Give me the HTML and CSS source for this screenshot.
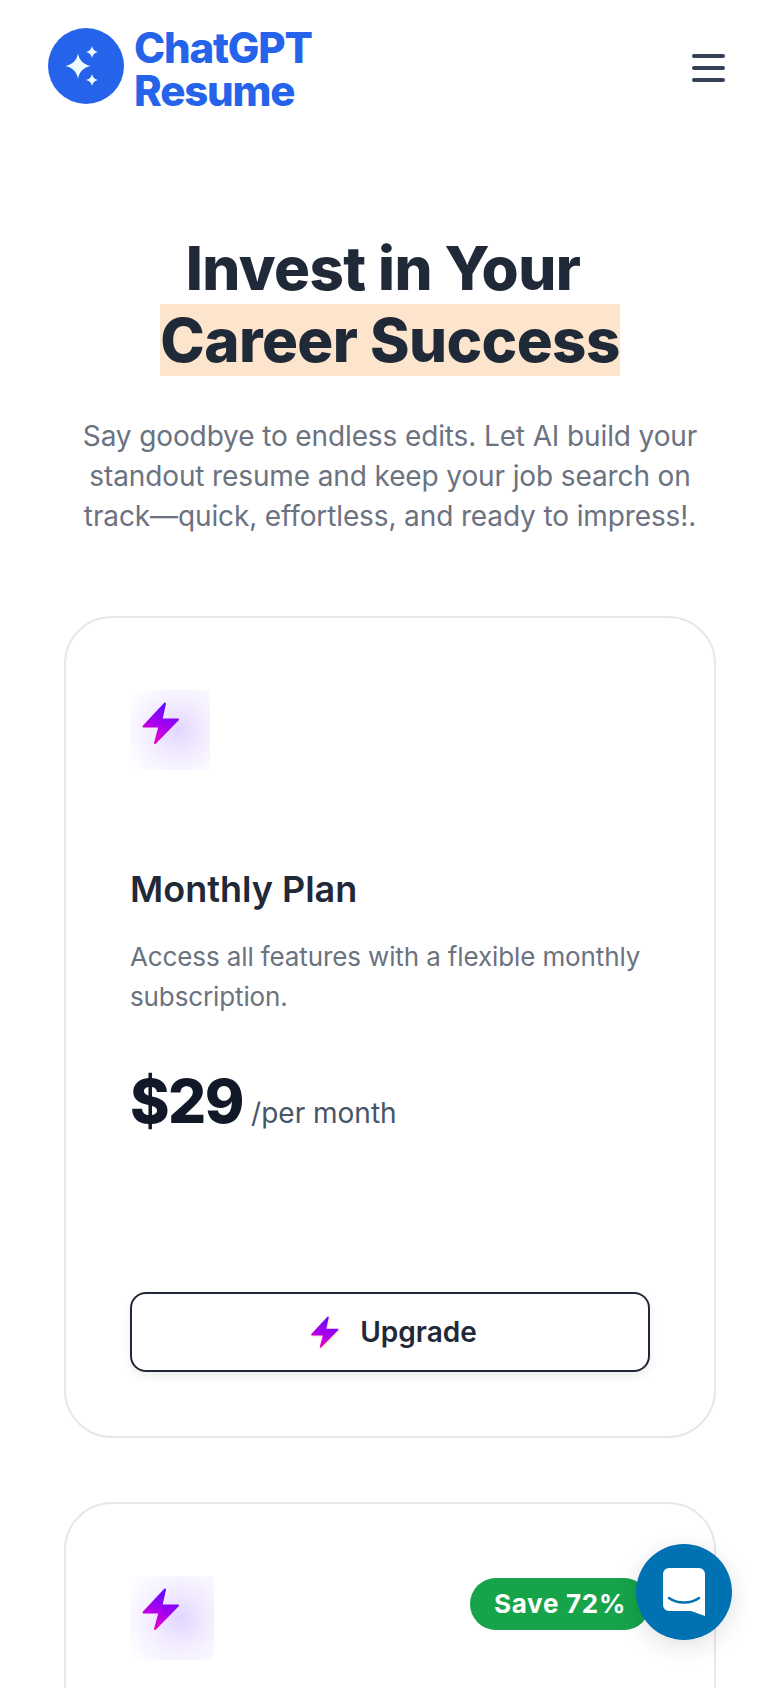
FILE: index.html
```html
<!DOCTYPE html>
<html lang="en">
<head>
<meta charset="UTF-8">
<meta name="viewport" content="width=device-width, initial-scale=1.0">
<title>ChatGPT Resume - Pricing</title>
<link rel="stylesheet" href="styles.css">
</head>
<body>

<svg class="defs" width="0" height="0" aria-hidden="true">
    <defs>
        <linearGradient id="bolt-fill" x1="0.7" y1="0" x2="0.3" y2="1">
            <stop offset="0" stop-color="#5b0cff"/>
            <stop offset="0.5" stop-color="#a200f0"/>
            <stop offset="1" stop-color="#ea00c8"/>
        </linearGradient>
        <symbol id="bolt" viewBox="0 0 40 44">
            <path d="M24 2.500 L20.500 18.500 H37 L14 42 L18.500 25.500 H2.500 Z" fill="url(#bolt-fill)" stroke="url(#bolt-fill)" stroke-width="2" stroke-linejoin="round"/>
        </symbol>
    </defs>
</svg>

<header class="site-header">
    <a class="logo" href="#">
        <svg class="logo-mark" viewBox="0 0 76 76">
            <circle cx="38" cy="38" r="38" fill="#2563eb"/>
            <path d="M30 25.500 C31.500 32.500 35 36 42.500 38 C35 40 31.500 43.500 30 50.500 C28.500 43.500 25 40 17.500 38 C25 36 28.500 32.500 30 25.500 Z" fill="#f0fbff"/>
            <path d="M44 18 C44.800 21.500 46.500 23.200 50 24 C46.500 24.800 44.800 26.500 44 30 C43.200 26.500 41.500 24.800 38 24 C41.500 23.200 43.200 21.500 44 18 Z" fill="#f0fbff"/>
            <path d="M44 46 C44.800 49.500 46.500 51.200 50 52 C46.500 52.800 44.800 54.500 44 58 C43.200 54.500 41.500 52.800 38 52 C41.500 51.200 43.200 49.500 44 46 Z" fill="#f0fbff"/>
        </svg>
        <span class="logo-text">ChatGPT<br>Resume</span>
    </a>
    <button class="menu-btn" aria-label="Menu">
        <svg viewBox="0 0 48 48" width="48" height="48">
            <path d="M10 12 H39 M10 24 H39 M10 36 H39" stroke="#334155" stroke-width="4" stroke-linecap="round" fill="none"/>
        </svg>
    </button>
</header>

<main>
    <section class="hero">
        <h1><span class="hero-first">Invest in Your</span><br><span class="mark">Career Success</span></h1>
        <p>Say goodbye to endless edits. Let AI build your standout resume and keep your job search on track—quick, effortless, and ready to impress!.</p>
    </section>

    <section class="plans">
        <div class="plan">
            <div class="plan-icon"><svg width="40" height="44"><use href="#bolt"/></svg></div>
            <h3>Monthly Plan</h3>
            <p class="plan-desc">Access all features with a flexible monthly subscription.</p>
            <div class="price"><span class="amount">$29</span> <span class="per">/per month</span></div>
            <a class="upgrade" href="#"><svg width="30" height="36"><use href="#bolt"/></svg>Upgrade</a>
        </div>

        <div class="plan plan-next">
            <span class="save">Save 72%</span>
            <div class="plan-icon plan-icon-lg"><svg width="40" height="44"><use href="#bolt"/></svg></div>
        </div>
    </section>
</main>

<button class="chat" aria-label="Chat">
    <svg viewBox="0 0 42 48" width="42" height="48">
        <path d="M6 0 H36 A6 6 0 0 1 42 6 V48 L28 43 H6 A6 6 0 0 1 0 37 V6 A6 6 0 0 1 6 0 Z" fill="#fff"/>
        <path d="M6 30 C14 36 28 36 36 30" stroke="#0071b2" stroke-width="2.500" stroke-linecap="round" fill="none"/>
    </svg>
</button>

</body>
</html>
```

FILE: styles.css
```css
/* Page */
html, body {
    margin: 0;
    height: 1688px;
    overflow: hidden;
}

body {
    background: #fff;
    color: #1f2937;
    font-family: Inter, "Liberation Sans", sans-serif;
}

.defs {
    position: absolute;
}

/* Header */
.site-header {
    display: flex;
    align-items: center;
    justify-content: space-between;
    height: 132px;
    padding: 0 48px;
}

.logo {
    display: flex;
    align-items: center;
    gap: 10px;
    text-decoration: none;
}

.logo-mark {
    width: 76px;
    height: 76px;
}

.logo-text {
    padding-top: 6px;
    color: #2563eb;
    font-size: 42px;
    font-weight: 800;
    line-height: 43px;
    letter-spacing: -1.200px;
}

.menu-btn {
    display: flex;
    padding: 0;
    border: 0;
    background: none;
    margin-top: 4px;
}

/* Hero */
.hero {
    padding: 100px 64px 0;
    text-align: center;
}

.hero h1 {
    margin: 0;
    font-size: 60px;
    font-weight: 800;
    line-height: 72px;
    letter-spacing: -0.600px;
}

.hero-first {
    padding-right: 14px;
}

.mark {
    background: #fce5cc;
}

.hero p {
    margin: 40px 0 0;
    color: #6b7280;
    font-size: 28px;
    line-height: 40px;
    letter-spacing: -0.120px;
}

/* Plans */
.plans {
    display: flex;
    flex-direction: column;
    gap: 64px;
    padding: 80px 64px 0;
}

.plan {
    position: relative;
    padding: 72px 64px 64px;
    border: 2px solid #e5e7eb;
    border-radius: 48px;
}

.plan-icon {
    box-sizing: border-box;
    width: 80px;
    height: 80px;
    padding: 11px;
    background: radial-gradient(circle at 60% 50%, #e2d6ff 0%, #f2ecff 42%, #fdfcff 85%);
}

.plan-icon svg {
    display: block;
}

.plan-icon-lg {
    width: 84px;
    height: 84px;
}

.plan h3 {
    margin: 97px 0 0;
    font-size: 36px;
    font-weight: 600;
    line-height: 44px;
}

.plan-desc {
    margin: 26px 0 0;
    color: #6b7280;
    font-size: 26px;
    line-height: 40px;
    letter-spacing: -0.120px;
}

.price {
    display: flex;
    align-items: baseline;
    gap: 8px;
    margin-top: 48px;
    color: #475569;
    font-size: 28px;
}

.amount {
    color: #111827;
    font-size: 60px;
    font-weight: 800;
    line-height: 72px;
    letter-spacing: -1.500px;
}

.upgrade {
    display: flex;
    align-items: center;
    justify-content: center;
    gap: 20px;
    height: 76px;
    margin-top: 155px;
    padding-left: 7px;
    border: 2px solid #1f2937;
    border-radius: 16px;
    box-shadow: 0 4px 10px rgba(0, 0, 0, 0.08);
    color: #1f2937;
    font-size: 28px;
    font-weight: 600;
    text-decoration: none;
}

.upgrade svg {
    filter: drop-shadow(1px 1px 1px rgba(250, 180, 120, 0.5));
}

.plan-next {
    height: 600px;
}

.save {
    position: absolute;
    top: 74px;
    right: 64px;
    padding: 0 24px;
    border-radius: 26px;
    background: #16a34a;
    color: #fff;
    font-size: 26px;
    font-weight: 700;
    line-height: 52px;
    letter-spacing: 0.700px;
}

/* Chat launcher */
.chat {
    position: fixed;
    left: 636px;
    top: 1544px;
    display: flex;
    align-items: center;
    justify-content: center;
    width: 96px;
    height: 96px;
    padding: 0;
    border: 0;
    border-radius: 50%;
    background: #0071b2;
    box-shadow: 0 6px 24px rgba(0, 0, 0, 0.12);
}
```
